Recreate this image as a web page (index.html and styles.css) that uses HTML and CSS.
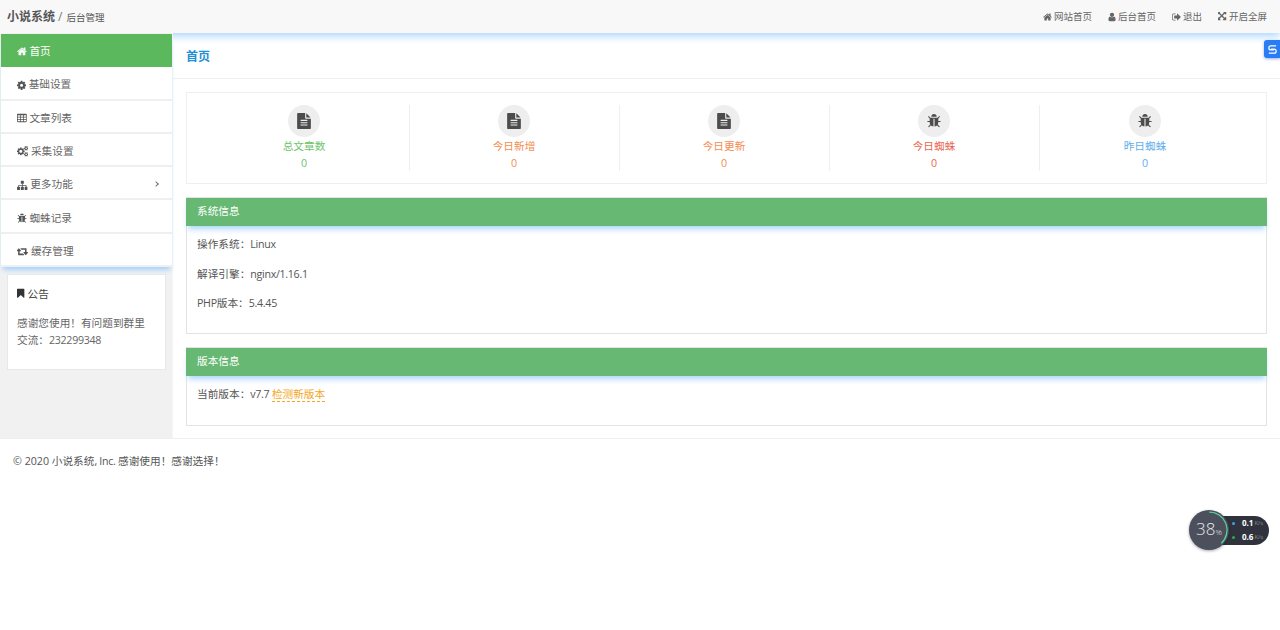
FILE: index.html
```html
<!DOCTYPE html>
<html lang="zh-CN">
<head>
<meta charset="utf-8">
<title>小说系统 / 后台管理</title>
<link rel="stylesheet" href="styles.css">
</head>
<body>
<svg class="sprite" xmlns="http://www.w3.org/2000/svg">
<symbol id="i-home" viewBox="64 0 1664 1792"><path d="M1472 992v480q0 26-19 45t-45 19h-384v-384h-256v384h-384q-26 0-45-19t-19-45v-480q0-1 .5-3t.5-3l575-474 575 474q1 2 1 6zm223-69l-62 74q-8 9-21 11h-3q-13 0-21-7l-692-577-692 577q-12 8-24 7-13-2-21-11l-62-74q-8-10-7-23.500t11-21.500l719-599q32-26 76-26t76 26l244 204v-195q0-14 9-23t23-9h192q14 0 23 9t9 23v408l219 182q10 8 11 21.500t-7 23.500z"/></symbol>
<symbol id="i-cog" viewBox="128 0 1536 1792"><path d="M1152 896q0-106-75-181t-181-75-181 75-75 181 75 181 181 75 181-75 75-181zm512-109v222q0 12-8 23t-20 13l-185 28q-19 54-39 91 35 50 107 138 10 12 10 25t-9 23q-27 37-99 108t-94 71q-12 0-26-9l-138-108q-44 23-91 38-16 136-29 186-7 28-36 28h-222q-14 0-24.500-8.500t-11.500-21.500l-28-184q-49-16-90-37l-141 107q-10 9-25 9-14 0-25-11-126-114-165-168-7-10-7-23 0-12 8-23 15-21 51-66.500t54-70.500q-27-50-41-99l-183-27q-13-2-21-12.500t-8-23.500v-222q0-12 8-23t19-13l186-28q14-46 39-92-40-57-107-138-10-12-10-24 0-10 9-23 26-36 98.500-107.500t94.500-71.500q13 0 26 10l138 107q44-23 91-38 16-136 29-186 7-28 36-28h222q14 0 24.500 8.500t11.500 21.500l28 184q49 16 90 37l142-107q9-9 24-9 13 0 25 10 129 119 165 170 7 8 7 22 0 12-8 23-15 21-51 66.500t-54 70.500q26 50 41 98l183 28q13 2 21 12.500t8 23.500z"/></symbol>
<symbol id="i-table" viewBox="64 0 1664 1792"><path d="M576 1376v-192q0-14-9-23t-23-9h-320q-14 0-23 9t-9 23v192q0 14 9 23t23 9h320q14 0 23-9t9-23zm0-384v-192q0-14-9-23t-23-9h-320q-14 0-23 9t-9 23v192q0 14 9 23t23 9h320q14 0 23-9t9-23zm512 384v-192q0-14-9-23t-23-9h-320q-14 0-23 9t-9 23v192q0 14 9 23t23 9h320q14 0 23-9t9-23zm-512-768v-192q0-14-9-23t-23-9h-320q-14 0-23 9t-9 23v192q0 14 9 23t23 9h320q14 0 23-9t9-23zm512 384v-192q0-14-9-23t-23-9h-320q-14 0-23 9t-9 23v192q0 14 9 23t23 9h320q14 0 23-9t9-23zm512 384v-192q0-14-9-23t-23-9h-320q-14 0-23 9t-9 23v192q0 14 9 23t23 9h320q14 0 23-9t9-23zm-512-768v-192q0-14-9-23t-23-9h-320q-14 0-23 9t-9 23v192q0 14 9 23t23 9h320q14 0 23-9t9-23zm512 384v-192q0-14-9-23t-23-9h-320q-14 0-23 9t-9 23v192q0 14 9 23t23 9h320q14 0 23-9t9-23zm0-384v-192q0-14-9-23t-23-9h-320q-14 0-23 9t-9 23v192q0 14 9 23t23 9h320q14 0 23-9t9-23zm128-320v1088q0 66-47 113t-113 47h-1344q-66 0-113-47t-47-113v-1088q0-66 47-113t113-47h1344q66 0 113 47t47 113z"/></symbol>
<symbol id="i-cogs" viewBox="0 0 1920 1792"><path d="M896 896q0-106-75-181t-181-75-181 75-75 181 75 181 181 75 181-75 75-181zm768 512q0-52-38-90t-90-38-90 38-38 90q0 53 37.500 90.500t90.500 37.500 90.500-37.500 37.500-90.500zm0-1024q0-52-38-90t-90-38-90 38-38 90q0 53 37.500 90.500t90.500 37.500 90.500-37.500 37.500-90.500zm-384 421v185q0 10-7 19.500t-16 10.500l-155 24q-11 35-32 76 34 48 90 115 7 11 7 20 0 12-7 19-23 30-82.500 89.500t-78.500 59.500q-11 0-21-7l-115-90q-37 19-77 31-11 108-23 155-7 24-30 24h-186q-11 0-20-7.500t-10-17.500l-23-153q-34-10-75-31l-118 89q-7 7-20 7-11 0-21-8-144-133-144-160 0-9 7-19 10-14 41-53t47-61q-23-44-35-82l-152-24q-10-1-17-9.500t-7-19.500v-185q0-10 7-19.500t16-10.500l155-24q11-35 32-76-34-48-90-115-7-11-7-20 0-12 7-20 22-30 82-89t79-59q11 0 21 7l115 90q34-18 77-32 11-108 23-154 7-24 30-24h186q11 0 20 7.500t10 17.500l23 153q34 10 75 31l118-89q8-7 20-7 11 0 21 8 144 133 144 160 0 8-7 19-12 16-42 54t-45 60q23 48 34 82l152 23q10 2 17 10.500t7 19.500zm640 533v140q0 16-149 31-12 27-30 52 51 113 51 138 0 4-4 7-122 71-124 71-8 0-46-47t-52-68q-20 2-30 2t-30-2q-14 21-52 68t-46 47q-2 0-124-71-4-3-4-7 0-25 51-138-18-25-30-52-149-15-149-31v-140q0-16 149-31 13-29 30-52-51-113-51-138 0-4 4-7 4-2 35-20t59-34 30-16q8 0 46 46.500t52 67.500q20-2 30-2t30 2q51-71 92-112l6-2q4 0 124 70 4 3 4 7 0 25-51 138 17 23 30 52 149 15 149 31zm0-1024v140q0 16-149 31-12 27-30 52 51 113 51 138 0 4-4 7-122 71-124 71-8 0-46-47t-52-68q-20 2-30 2t-30-2q-14 21-52 68t-46 47q-2 0-124-71-4-3-4-7 0-25 51-138-18-25-30-52-149-15-149-31v-140q0-16 149-31 13-29 30-52-51-113-51-138 0-4 4-7 4-2 35-20t59-34 30-16q8 0 46 46.500t52 67.500q20-2 30-2t30 2q51-71 92-112l6-2q4 0 124 70 4 3 4 7 0 25-51 138 17 23 30 52 149 15 149 31z"/></symbol>
<symbol id="i-sitemap" viewBox="0 0 1792 1792"><path d="M1792 1248v320q0 40-28 68t-68 28h-320q-40 0-68-28t-28-68v-320q0-40 28-68t68-28h96v-192h-512v192h96q40 0 68 28t28 68v320q0 40-28 68t-68 28h-320q-40 0-68-28t-28-68v-320q0-40 28-68t68-28h96v-192h-512v192h96q40 0 68 28t28 68v320q0 40-28 68t-68 28h-320q-40 0-68-28t-28-68v-320q0-40 28-68t68-28h96v-192q0-52 38-90t90-38h512v-192h-96q-40 0-68-28t-28-68v-320q0-40 28-68t68-28h320q40 0 68 28t28 68v320q0 40-28 68t-68 28h-96v192h512q52 0 90 38t38 90v192h96q40 0 68 28t28 68z"/></symbol>
<symbol id="i-bug" viewBox="64 0 1664 1792"><path d="M1696 960q0 26-19 45t-45 19h-224q0 171-67 290l208 209q19 19 19 45t-19 45q-18 19-45 19t-45-19l-198-197q-5 5-15 13t-42 28.500-65 36.500-82 29-97 13v-896h-128v896q-51 0-101.500-13.500t-87-33-66-39-43.500-32.500l-15-14-183 207q-20 21-48 21-24 0-43-16-19-18-20.500-44.500t15.500-46.500l202-227q-58-114-58-274h-224q-26 0-45-19t-19-45 19-45 45-19h224v-294l-173-173q-19-19-19-45t19-45 45-19 45 19l173 173h844l173-173q19-19 45-19t45 19 19 45-19 45l-173 173v294h224q26 0 45 19t19 45zm-480-576h-640q0-133 93.500-226.500t226.500-93.500 226.500 93.500 93.500 226.500z"/></symbol>
<symbol id="i-retweet" viewBox="0 0 1920 1792"><path d="M1216 1504q0 13-9.500 22.500t-22.500 9.500h-960q-8 0-13.500-2t-9-7-5.500-8-3-11.500-1-11.500v-600h-192q-26 0-45-19t-19-45q0-24 15-41l320-384q19-22 49-22t49 22l320 384q15 17 15 41 0 26-19 45t-45 19h-192v384h576q16 0 25 11l160 192q7 10 7 21zm640-416q0 24-15 41l-320 384q-20 23-49 23t-49-23l-320-384q-15-17-15-41 0-26 19-45t45-19h192v-384h-576q-16 0-25-12l-160-192q-7-9-7-20 0-13 9.500-22.500t22.500-9.500h960q8 0 13.500 2t9 7 5.500 8 3 11.500 1 11.500v600h192q26 0 45 19t19 45z"/></symbol>
<symbol id="i-bookmark" viewBox="256 0 1280 1792"><path d="M1420 128q23 0 44 9 33 13 52.500 41t19.500 62v1289q0 34-19.500 62t-52.500 41q-19 8-44 8-48 0-83-32l-441-424-441 424q-36 33-83 33-23 0-44-9-33-13-52.500-41t-19.500-62v-1289q0-34 19.500-62t52.500-41q21-9 44-9h1048z"/></symbol>
<symbol id="i-user" viewBox="256 0 1280 1792"><path d="M1536 1399q0 109-62.500 187t-150.500 78h-854q-88 0-150.500-78t-62.500-187q0-85 8.500-160.500t31.500-152 58.500-131 94-89 134.500-34.500q131 128 313 128t313-128q76 0 134.500 34.500t94 89 58.500 131 31.500 152 8.500 160.500zm-256-887q0 159-112.500 271.500t-271.500 112.500-271.500-112.500-112.500-271.500 112.500-271.500 271.500-112.500 271.500 112.500 112.500 271.500z"/></symbol>
<symbol id="i-signout" viewBox="64 0 1600 1792"><path d="M704 1440q0 4 1 20t.5 26.500-3 23.500-10 19.500-20.500 6.500h-320q-119 0-203.500-84.500t-84.500-203.500v-704q0-119 84.500-203.500t203.500-84.500h320q13 0 22.500 9.500t9.500 22.500q0 4 1 20t.5 26.500-3 23.500-10 19.500-20.500 6.500h-320q-66 0-113 47t-47 113v704q0 66 47 113t113 47h312l11.500 1 11.500 3 8 5.500 7 9 2 13.500zm928-544q0 26-19 45l-544 544q-19 19-45 19t-45-19-19-45v-288h-448q-26 0-45-19t-19-45v-384q0-26 19-45t45-19h448v-288q0-26 19-45t45-19 45 19l544 544q19 19 19 45z"/></symbol>
<symbol id="i-arrows" viewBox="128 128 1536 1536"><path d="M1283 413l-355 355 355 355 144-144q29-31 70-14 39 17 39 59v448q0 26-19 45t-45 19h-448q-42 0-59-40-17-39 14-69l144-144-355-355-355 355 144 144q31 30 14 69-17 40-59 40h-448q-26 0-45-19t-19-45v-448q0-42 40-59 39-17 69 14l144 144 355-355-355-355-144 144q-19 19-45 19-12 0-24-5-40-17-40-59v-448q0-26 19-45t45-19h448q42 0 59 40 17 39-14 69l-144 144 355 355 355-355-144-144q-31-30-14-69 17-40 59-40h448q26 0 45 19t19 45v448q0 42-39 59-13 5-25 5-26 0-45-19z"/></symbol>
<symbol id="i-file" viewBox="128 0 1536 1792"><path d="M1596 476q14 14 28 36h-472v-472q22 14 36 28zm-476 164h544v1056q0 40-28 68t-68 28h-1344q-40 0-68-28t-28-68v-1600q0-40 28-68t68-28h800v544q0 40 28 68t68 28zm160 736v-64q0-14-9-23t-23-9h-704q-14 0-23 9t-9 23v64q0 14 9 23t23 9h704q14 0 23-9t9-23zm0-256v-64q0-14-9-23t-23-9h-704q-14 0-23 9t-9 23v64q0 14 9 23t23 9h704q14 0 23-9t9-23zm0-256v-64q0-14-9-23t-23-9h-704q-14 0-23 9t-9 23v64q0 14 9 23t23 9h704q14 0 23-9t9-23z"/></symbol>
</svg>

<header class="topbar">
  <div class="brand"><strong>小说系统</strong><span class="slash">/</span><small>后台管理</small></div>
  <nav class="topnav">
    <a><svg class="ic ic-home"><use href="#i-home"/></svg>网站首页</a>
    <a><svg class="ic ic-user"><use href="#i-user"/></svg>后台首页</a>
    <a><svg class="ic ic-out"><use href="#i-signout"/></svg>退出</a>
    <a><svg class="ic ic-arr"><use href="#i-arrows"/></svg>开启全屏</a>
  </nav>
</header>

<div class="layout">
  <aside class="sidebar">
    <ul class="menu">
      <li class="active"><svg class="ic ic-m w-home"><use href="#i-home"/></svg>首页</li>
      <li><svg class="ic ic-m w-cog"><use href="#i-cog"/></svg>基础设置</li>
      <li><svg class="ic ic-m w-home"><use href="#i-table"/></svg>文章列表</li>
      <li><svg class="ic ic-m w-wide"><use href="#i-cogs"/></svg>采集设置</li>
      <li><svg class="ic ic-m w-full"><use href="#i-sitemap"/></svg>更多功能<span class="chev"></span></li>
      <li><svg class="ic ic-m w-home"><use href="#i-bug"/></svg>蜘蛛记录</li>
      <li><svg class="ic ic-m w-wide"><use href="#i-retweet"/></svg>缓存管理</li>
    </ul>
    <div class="notice">
      <h4><svg class="ic ic-book"><use href="#i-bookmark"/></svg>公告</h4>
      <p>感谢您使用！有问题到群里</p>
      <p>交流：<span class="lat">232299348</span></p>
    </div>
  </aside>

  <main class="main">
    <h2 class="page-title">首页</h2>
    <div class="content">
      <section class="stats">
        <div class="stat green"><span class="circle"><svg class="ic-stat"><use href="#i-file"/></svg></span><b>总文章数</b><em>0</em></div>
        <div class="stat orange"><span class="circle"><svg class="ic-stat"><use href="#i-file"/></svg></span><b>今日新增</b><em>0</em></div>
        <div class="stat orange"><span class="circle"><svg class="ic-stat"><use href="#i-file"/></svg></span><b>今日更新</b><em>0</em></div>
        <div class="stat red"><span class="circle"><svg class="ic-stat"><use href="#i-bug"/></svg></span><b>今日蜘蛛</b><em>0</em></div>
        <div class="stat blue"><span class="circle"><svg class="ic-stat"><use href="#i-bug"/></svg></span><b>昨日蜘蛛</b><em>0</em></div>
      </section>

      <section class="panel">
        <h3>系统信息</h3>
        <div class="panel-body sys">
          <p>操作系统：<span class="lat">Linux</span></p>
          <p>解译引擎：<span class="lat">nginx/1.16.1</span></p>
          <p><span class="lat">PHP</span>版本：<span class="lat">5.4.45</span></p>
        </div>
      </section>

      <section class="panel">
        <h3>版本信息</h3>
        <div class="panel-body ver">
          <p>当前版本：<span class="lat">v7.7 </span><a class="check">检测新版本</a></p>
        </div>
      </section>
    </div>
  </main>
</div>

<footer class="footer">© 2020 小说系统<span class="lat">, Inc. </span>感谢使用！感谢选择！</footer>

<div class="side-tab"><svg viewBox="0 0 16 16" class="side-s"><path d="M12.500 3.500H6a2.500 2.500 0 0 0 0 5h4"/><path d="M3.500 12.500H10a2.500 2.500 0 0 0 0-5H6"/></svg></div>

<div class="speed">
  <div class="speed-pill">
    <div class="speed-row"><i class="dot up"></i><b>0.1</b><small>K/s</small></div>
    <div class="speed-row"><i class="dot down"></i><b>0.6</b><small>K/s</small></div>
  </div>
  <div class="gauge">
    <svg class="gauge-arc" viewBox="0 0 40 40"><path d="M20 2A18 18 0 0 1 32.300 33.200"/></svg>
    <span class="gauge-num">38<small>%</small></span>
  </div>
</div>
</body>
</html>
```

FILE: styles.css
```css
* { box-sizing: border-box; }
html, body { margin: 0; padding: 0; }
body {
  background: #fff;
  color: #555;
  font: 10.67px/17px "Open Sans", "Noto Sans CJK SC", sans-serif;
  min-height: 630px;
  position: relative;
  overflow: hidden;
}
.lat { letter-spacing: -.3px; }
.sprite { display: none; }
.ic { fill: currentColor; display: inline-block; vertical-align: -1px; flex: none; }

.topbar {
  height: 33px;
  background: #f8f8f8;
  display: flex;
  align-items: center;
  justify-content: space-between;
  padding: 0 13px 0 7px;
  box-shadow: 0 3px 8px #a8d5ff;
  position: relative;
}
.brand { color: #555; display: flex; align-items: baseline; }
.brand strong { font-size: 12px; font-weight: 700; }
.brand .slash { margin: 0 4px 0 3px; font-size: 12px; color: #777; }
.brand small { font-size: 9.5px; }
.topnav { display: flex; gap: 16px; font-size: 9.5px; color: #666; }
.topnav a { display: flex; align-items: center; }
.ic-home { width: 9px; height: 10px; margin-right: 2px; }
.ic-user { width: 8px; height: 10px; margin-right: 2px; }
.ic-out { width: 9px; height: 10px; margin-right: 2px; }
.ic-arr { width: 9px; height: 9px; margin-right: 2px; }

.layout { display: flex; height: 405px; position: relative; }

.sidebar {
  width: 173px;
  background: #f1f1f1;
  padding-top: 1px;
  position: relative;
  border-right: 1px solid #f6f6f6;
}
.menu {
  list-style: none;
  margin: 0 0 0 1px;
  padding: 0;
  background: #fff;
  box-shadow: 0 5px 5px -2px #a3d2fb;
  position: relative;
}
.menu li {
  height: 33.3px;
  display: flex;
  align-items: center;
  padding: 4px 0 0 16px;
  border-bottom: 2px solid #efefef;
  position: relative;
  color: #666;
}
.menu li.active { background: #5cb85c; color: #fff; border-bottom: 0; padding-top: 1px; }
.ic-m { height: 10.67px; margin-right: 2.5px; color: #555; }
.w-home { width: 9.9px; }
.w-cog { width: 9.14px; }
.w-wide { width: 11.43px; }
.w-full { width: 10.67px; }
.active .ic-m { color: #fff; }
.chev {
  position: absolute;
  right: 14px;
  top: 15px;
  width: 4px;
  height: 4px;
  border-top: 1px solid #777;
  border-right: 1px solid #777;
  transform: rotate(45deg);
}

.notice {
  margin: 7px 6px 0 7px;
  height: 96px;
  background: #fff;
  border: 1px solid #e8e8e8;
  padding: 11px 14px 10px 9px;
  position: relative;
}
.notice h4 { margin: 0 0 12px; font-weight: 400; font-size: 10.67px; color: #444; }
.ic-book { width: 7.600px; height: 10.67px; margin-right: 3px; color: #333; }
.notice p { margin: 0; color: #666; }

.main { flex: 1; min-width: 0; }
.page-title {
  margin: 8px 0 0;
  height: 38px;
  padding: 7px 13px 0;
  font-size: 12px;
  line-height: 17px;
  font-weight: 700;
  color: #1c8fd6;
  border-bottom: 1px solid #f0f0f0;
}
.content { padding: 13px 13px 0; }

.stats {
  height: 92px;
  border: 1px solid #efefef;
  display: flex;
  padding: 12px 0 0 13px;
}
.stat {
  width: 210px;
  height: 66px;
  padding-right: 1px;
  border-right: 1px solid #efefef;
  display: flex;
  flex-direction: column;
  align-items: center;
}
.stat:last-child { border-right: 0; padding-right: 0; }
.circle {
  flex: none;
  width: 32px;
  height: 32px;
  border-radius: 50%;
  background: #eee;
  display: flex;
  align-items: center;
  justify-content: center;
  margin-bottom: 1px;
}
.ic-stat { width: 14px; height: 16px; fill: #4c4c4c; }
.stat b { flex: none; font-weight: 400; }
.stat em { flex: none; font-style: normal; }
.green { color: #6cc56c; }
.orange { color: #f58c4e; }
.red { color: #e8664f; }
.blue { color: #62aeea; }

.panel { border: 1px solid #e3e3e3; margin-top: 13px; }
.panel h3 {
  margin: 0 -1px;
  height: 28px;
  line-height: 27px;
  background: #66b873;
  color: #fff;
  font-size: 10.67px;
  font-weight: 400;
  padding: 0 11px;
  box-shadow: 0 5px 6px -2px #a8d5fb;
  position: relative;
}
.panel-body { padding: 10px 10px 0; color: #555; }
.panel-body p { margin: 0; }
.sys { height: 107px; }
.sys p { margin-bottom: 12.500px; }
.ver { height: 49px; padding-top: 10px; }
.check { color: #f5a623; border-bottom: 1px dashed #f5a623; }

.footer {
  height: 45px;
  padding: 14px 13px;
  border-top: 1px solid #f0f0f0;
  color: #555;
}

.side-tab {
  position: absolute;
  left: 1264px;
  top: 40px;
  width: 16px;
  height: 18px;
  background: #2a7bf6;
  border-radius: 3px 0 0 3px;
  box-shadow: 0 1px 3px rgba(0, 60, 160, .4);
  display: flex;
  align-items: center;
  justify-content: center;
}
.side-s { width: 13px; height: 13px; fill: none; stroke: #fff; stroke-width: 1.500; }

.speed { position: absolute; left: 1188px; top: 510px; width: 82px; height: 40px; }
.speed-pill {
  position: absolute;
  left: 28px;
  top: 6px;
  width: 53px;
  height: 29px;
  background: #30333d;
  border-radius: 0 15px 15px 0;
  padding: 0 0 0 16px;
  color: #fff;
  font-size: 8px;
}
.speed-row { height: 14px; line-height: 14px; display: flex; align-items: center; }
.speed-row b { font-weight: 700; margin-left: 7px; }
.speed-row small { font-size: 6px; color: #8a8d97; margin-left: 1px; }
.dot { width: 3px; height: 3px; border-radius: 50%; }
.dot.up { background: #3aa7e8; }
.dot.down { background: #2fae4e; }
.gauge {
  position: absolute;
  left: 1px;
  top: 0;
  width: 40px;
  height: 40px;
  border-radius: 50%;
  background: #4c505c;
  box-shadow: 0 1px 3px rgba(0, 0, 0, .35);
  color: #e6e7ea;
  display: flex;
  align-items: center;
  justify-content: center;
}
.gauge-arc { position: absolute; inset: 0; fill: none; stroke: #59d6a5; stroke-width: 1.200; }
.gauge-num { font-size: 17px; font-weight: 300; line-height: 20px; }
.gauge-num small { font-size: 8px; }
```
